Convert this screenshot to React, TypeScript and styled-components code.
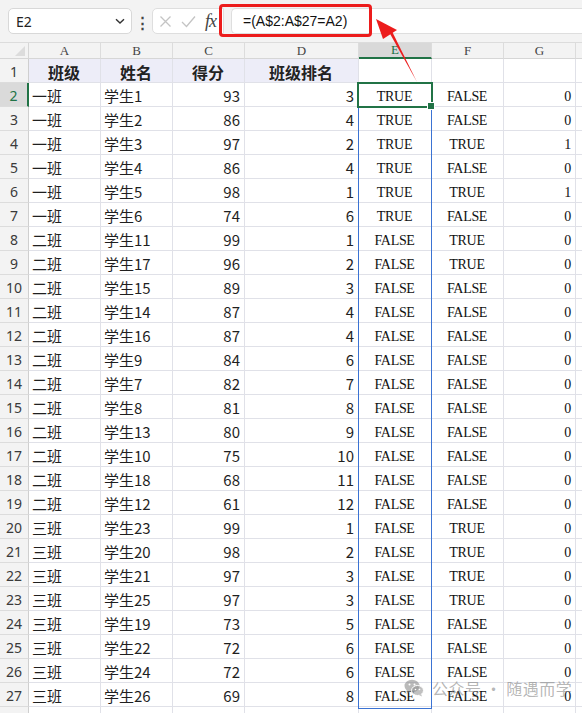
import React from "react";
import styled, { createGlobalStyle, css } from "styled-components";

const GlobalStyle = createGlobalStyle`
  html, body { margin: 0; padding: 0; background: #ffffff; }
  body { font-family: "Noto Sans CJK SC", "Noto Sans", sans-serif; }
  * { box-sizing: border-box; }
`;

type Row = [string, string, number, number, boolean, boolean, number];

const rows: Row[] = [
  ["一班", "学生1", 93, 3, true, false, 0],
  ["一班", "学生2", 86, 4, true, false, 0],
  ["一班", "学生3", 97, 2, true, true, 1],
  ["一班", "学生4", 86, 4, true, false, 0],
  ["一班", "学生5", 98, 1, true, true, 1],
  ["一班", "学生6", 74, 6, true, false, 0],
  ["二班", "学生11", 99, 1, false, true, 0],
  ["二班", "学生17", 96, 2, false, true, 0],
  ["二班", "学生15", 89, 3, false, false, 0],
  ["二班", "学生14", 87, 4, false, false, 0],
  ["二班", "学生16", 87, 4, false, false, 0],
  ["二班", "学生9", 84, 6, false, false, 0],
  ["二班", "学生7", 82, 7, false, false, 0],
  ["二班", "学生8", 81, 8, false, false, 0],
  ["二班", "学生13", 80, 9, false, false, 0],
  ["二班", "学生10", 75, 10, false, false, 0],
  ["二班", "学生18", 68, 11, false, false, 0],
  ["二班", "学生12", 61, 12, false, false, 0],
  ["三班", "学生23", 99, 1, false, true, 0],
  ["三班", "学生20", 98, 2, false, true, 0],
  ["三班", "学生21", 97, 3, false, true, 0],
  ["三班", "学生25", 97, 3, false, true, 0],
  ["三班", "学生19", 73, 5, false, false, 0],
  ["三班", "学生22", 72, 6, false, false, 0],
  ["三班", "学生24", 72, 6, false, false, 0],
  ["三班", "学生26", 69, 8, false, false, 0],
];

const columns = ["A", "B", "C", "D", "E", "F", "G", ""];
const headings = ["班级", "姓名", "得分", "班级排名"];

const GRID = "#e0e1e8";
const GREEN = "#217346";

const Page = styled.div`
  position: relative;
  width: 582px;
  height: 713px;
  overflow: hidden;
  background: #ffffff;
`;

const Toolbar = styled.div`
  display: flex;
  align-items: center;
  height: 43px;
  padding: 0 0 0 8px;
  background: #f3f3f3;
  border-bottom: 1px solid #dcdcdc;
`;

const NameBox = styled.div`
  display: flex;
  align-items: center;
  justify-content: space-between;
  width: 124px;
  height: 26px;
  padding: 0 5px 0 7px;
  background: #ffffff;
  border: 1px solid #d8d8d8;
  border-radius: 5px;
  font-family: "Noto Sans", sans-serif;
  font-size: 14px;
  color: #222;
`;

const Kebab = styled.div`
  width: 20px;
  text-align: center;
  font-size: 15px;
  font-weight: 700;
  color: #444;
  line-height: 1;
`;

const FxBox = styled.div`
  display: flex;
  align-items: center;
  gap: 9px;
  width: 72px;
  height: 26px;
  padding: 0 0 0 6px;
  background: #ffffff;
  border: 1px solid #dedede;
  border-radius: 5px 0 0 5px;
  color: #c2c2c2;
`;

const FxLabel = styled.span`
  font-family: "Liberation Serif", serif;
  font-style: italic;
  font-size: 18px;
  color: #444;
  letter-spacing: -1px;
`;

const FormulaInput = styled.div`
  flex: 1;
  display: flex;
  align-items: center;
  height: 26px;
  margin-left: 7px;
  padding-left: 11px;
  background: #ffffff;
  border: 1px solid #dedede;
  border-right: none;
  border-radius: 5px 0 0 5px;
  font-family: "Liberation Sans", sans-serif;
  font-size: 14px;
  color: #111;
`;

const Sheet = styled.div`
  position: relative;
  display: grid;
  grid-template-columns: 29px 72px 72px 72px 114px 73px 72px 72px 1fr;
  grid-template-rows: 16px;
  grid-auto-rows: 24px;
`;

const Corner = styled.div`
  position: relative;
  background: #f3f3f3;
  border-right: 1px solid #d6d6d6;
  border-bottom: 1px solid #d6d6d6;
  &::after {
    content: "";
    position: absolute;
    right: 3px;
    bottom: 2px;
    border-left: 10px solid transparent;
    border-bottom: 10px solid #dcdcdc;
  }
`;

const ColHead = styled.div<{ $active?: boolean }>`
  display: flex;
  align-items: center;
  justify-content: center;
  background: #f3f3f3;
  border-right: 1px solid #dcdcdc;
  border-bottom: 1px solid #d6d6d6;
  font-family: "Liberation Serif", serif;
  font-size: 13px;
  color: #444;
  ${(p) =>
    p.$active &&
    css`
      background: #d9d9d9;
      color: ${GREEN};
      border-bottom: 2px solid ${GREEN};
    `}
`;

const RowHead = styled.div<{ $active?: boolean }>`
  display: flex;
  align-items: center;
  justify-content: center;
  padding-top: 2px;
  background: #f3f3f3;
  border-right: 1px solid #cfcfcf;
  border-bottom: 1px solid #dcdcdc;
  font-family: "Noto Sans", sans-serif;
  font-size: 14px;
  color: #3a3a3a;
  ${(p) =>
    p.$active &&
    css`
      background: #dadada;
      color: ${GREEN};
      border-right: 2px solid ${GREEN};
    `}
`;

const Cell = styled.div<{ $align?: "left" | "center" | "right"; $head?: boolean; $mono?: boolean }>`
  display: flex;
  align-items: center;
  justify-content: ${(p) =>
    p.$align === "right" ? "flex-end" : p.$align === "center" ? "center" : "flex-start"};
  padding: 2px 4px 0 3px;
  border-right: 1px solid ${GRID};
  border-bottom: 1px solid ${GRID};
  font-family: "Noto Sans CJK SC", "Noto Sans", sans-serif;
  font-size: 15px;
  color: #1f1f1f;
  white-space: nowrap;
  overflow: hidden;
  ${(p) =>
    p.$head &&
    css`
      background: #ededf8;
      font-size: 16px;
      font-weight: 700;
      color: #222;
    `}
  ${(p) =>
    p.$mono &&
    css`
      font-family: "Liberation Serif", serif;
      font-size: 14px;
      letter-spacing: -0.3px;
      color: #111;
      padding-top: 4px;
    `}
`;

const RangeOutline = styled.div`
  position: absolute;
  left: 358px;
  top: 40px;
  width: 74px;
  height: 626px;
  border: 1px solid #3b73d3;
  pointer-events: none;
`;

const ActiveCell = styled.div`
  position: absolute;
  left: 357px;
  top: 39px;
  width: 76px;
  height: 26px;
  border: 2px solid ${GREEN};
  pointer-events: none;
  &::after {
    content: "";
    position: absolute;
    right: -4px;
    bottom: -4px;
    width: 6px;
    height: 6px;
    background: ${GREEN};
    border: 1px solid #ffffff;
  }
`;

const Highlight = styled.div`
  position: absolute;
  left: 219px;
  top: 4px;
  width: 153px;
  height: 33px;
  border: 3px solid #ec1c1c;
  border-radius: 4px;
  pointer-events: none;
`;

const Annotation = styled.svg`
  position: absolute;
  left: 0;
  top: 0;
  pointer-events: none;
`;

const Watermark = styled.div`
  position: absolute;
  left: 404px;
  top: 676px;
  display: flex;
  align-items: center;
  gap: 8px;
  font-family: "Noto Sans CJK SC", sans-serif;
  font-size: 16px;
  color: rgba(120, 120, 120, 0.55);
  letter-spacing: 0.5px;
  pointer-events: none;
`;

const Chevron = () => (
  <svg width="12" height="12" viewBox="0 0 12 12">
    <path d="M2 4.2 L6 8 L10 4.2" fill="none" stroke="#333" strokeWidth="1.4" />
  </svg>
);

const CrossIcon = () => (
  <svg width="13" height="13" viewBox="0 0 13 13">
    <path d="M1.5 1.5 L11.5 11.5 M11.5 1.5 L1.5 11.5" stroke="#c4c4c4" strokeWidth="1.3" />
  </svg>
);

const CheckIcon = () => (
  <svg width="15" height="13" viewBox="0 0 15 13">
    <path d="M1 7 L5.5 11.5 L14 1.5" fill="none" stroke="#c4c4c4" strokeWidth="1.3" />
  </svg>
);

const WeChatIcon = () => (
  <svg width="20" height="18" viewBox="0 0 20 18">
    <ellipse cx="8" cy="7" rx="7.5" ry="6.3" fill="rgba(130,130,130,0.55)" />
    <path d="M3 12 L2.5 15 L6 12.5 Z" fill="rgba(130,130,130,0.55)" />
    <ellipse cx="13.5" cy="11.5" rx="6" ry="5" fill="rgba(150,150,150,0.6)" stroke="#ffffff" strokeWidth="1" />
    <path d="M17 15 L18 17.5 L15 16 Z" fill="rgba(150,150,150,0.6)" />
    <circle cx="5.5" cy="5.5" r="1" fill="#fff" />
    <circle cx="10.5" cy="5.5" r="1" fill="#fff" />
    <circle cx="11.5" cy="10.5" r="0.8" fill="#fff" />
    <circle cx="15.5" cy="10.5" r="0.8" fill="#fff" />
  </svg>
);

export default function App() {
  return (
    <>
      <GlobalStyle />
      <Page>
        <Toolbar>
          <NameBox>
            <span>E2</span>
            <Chevron />
          </NameBox>
          <Kebab>⋮</Kebab>
          <FxBox>
            <CrossIcon />
            <CheckIcon />
            <FxLabel>fx</FxLabel>
          </FxBox>
          <FormulaInput>=(A$2:A$27=A2)</FormulaInput>
        </Toolbar>

        <Sheet>
          <Corner />
          {columns.map((c, i) => (
            <ColHead key={i} $active={c === "E"}>
              {c}
            </ColHead>
          ))}

          <RowHead>1</RowHead>
          {headings.map((h) => (
            <Cell key={h} $head $align="center">
              {h}
            </Cell>
          ))}
          <Cell />
          <Cell />
          <Cell />
          <Cell />

          {rows.map((r, i) => (
            <React.Fragment key={i}>
              <RowHead $active={i === 0}>{i + 2}</RowHead>
              <Cell>{r[0]}</Cell>
              <Cell>{r[1]}</Cell>
              <Cell $align="right">{r[2]}</Cell>
              <Cell $align="right">{r[3]}</Cell>
              <Cell $align="center" $mono>
                {r[4] ? "TRUE" : "FALSE"}
              </Cell>
              <Cell $align="center" $mono>
                {r[5] ? "TRUE" : "FALSE"}
              </Cell>
              <Cell $align="right" $mono>
                {r[6]}
              </Cell>
              <Cell />
            </React.Fragment>
          ))}

          {/* partially visible next row */}
          <RowHead />
          {columns.map((_, i) => (
            <Cell key={i} />
          ))}

          <RangeOutline />
          <ActiveCell />
        </Sheet>

        <Highlight />
        <Annotation width="582" height="713" viewBox="0 0 582 713">
          <path d="M417 82 L389 32 L391.6 30.6 Z" fill="#ec1c1c" />
          <path d="M376 19 L383 39 L397 30 Z" fill="#ec1c1c" />
        </Annotation>

        <Watermark>
          <WeChatIcon />
          <span>公众号 · 随遇而学</span>
        </Watermark>
      </Page>
    </>
  );
}
